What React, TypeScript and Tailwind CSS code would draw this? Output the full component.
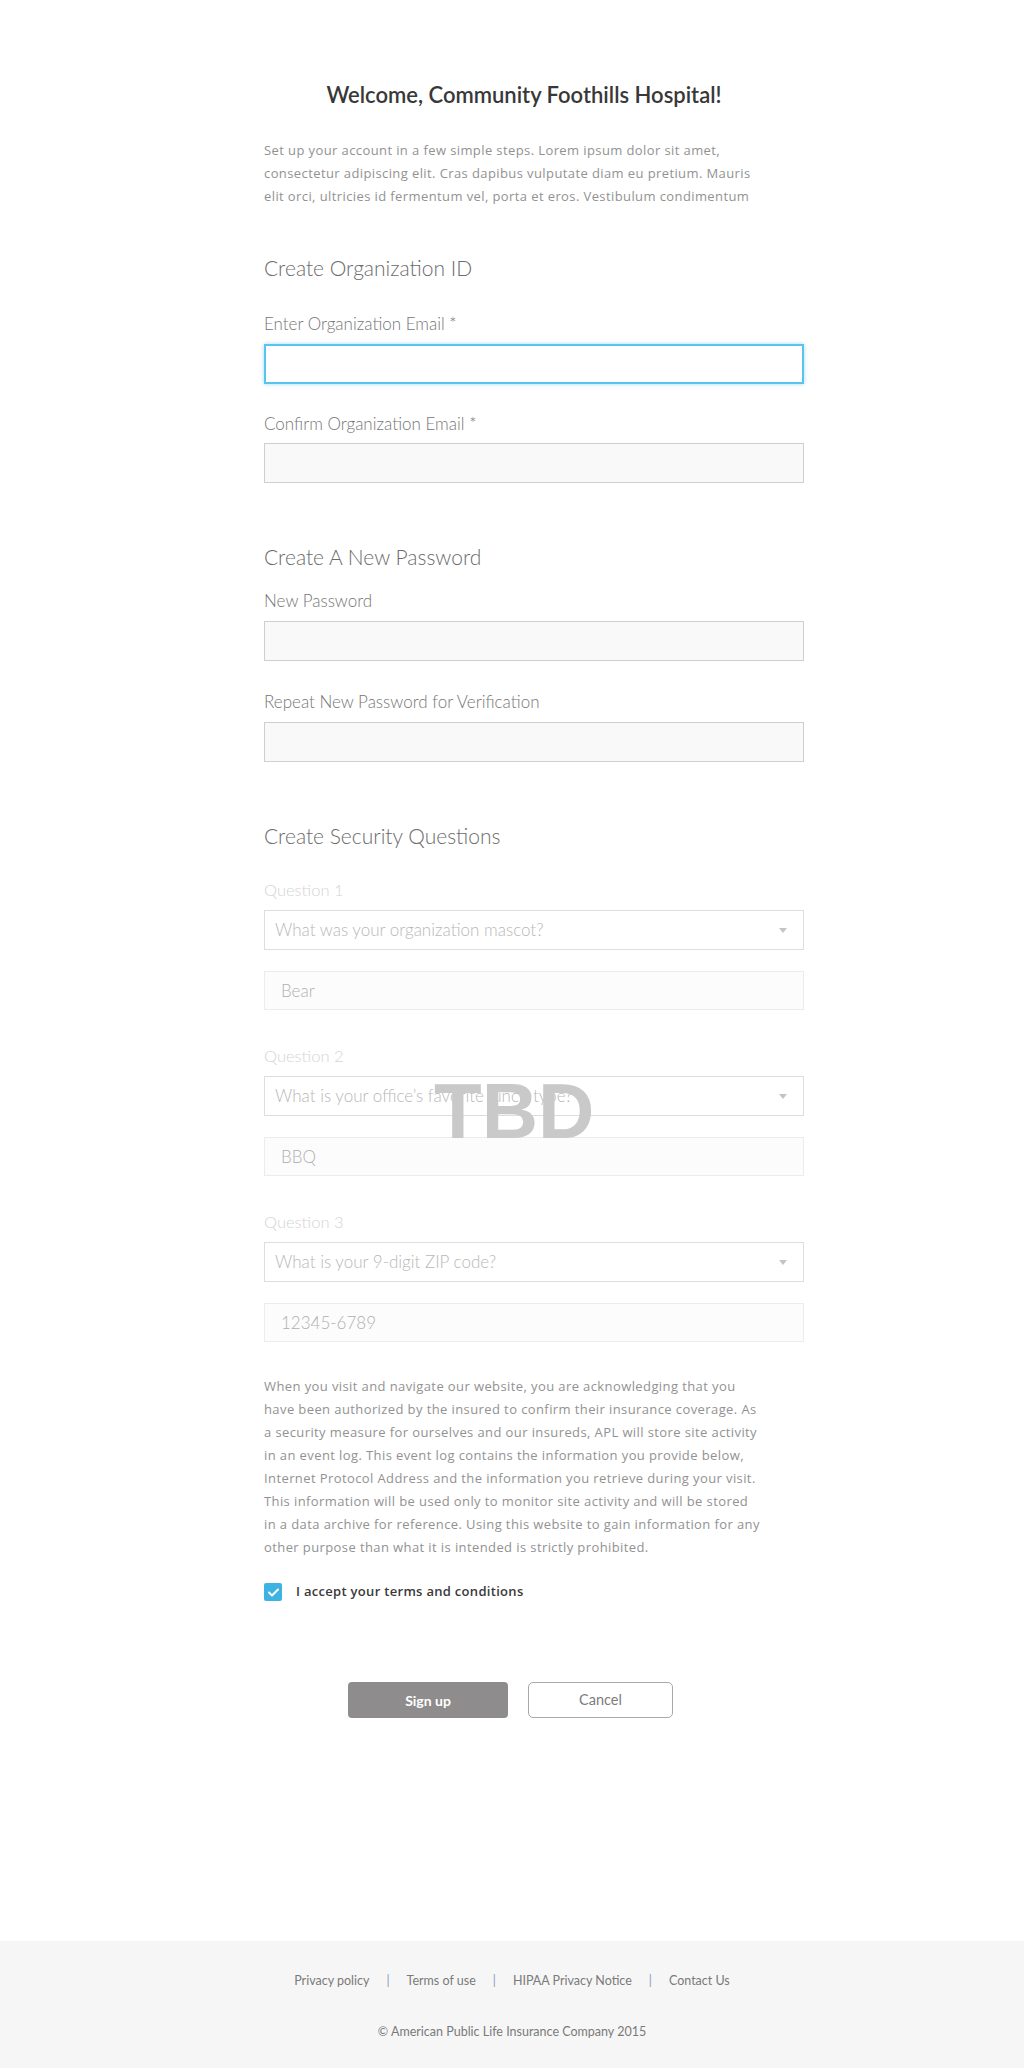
const heading = "font-['Lato',sans-serif] font-light text-[21px] leading-[28px] text-[#6b6b6b]";
const label = "block font-['Lato',sans-serif] font-light text-[17px] leading-[20px] text-[#767676]";
const input = "block w-full h-[40px] bg-[#f9f9f9] border border-[#cfcfcf] outline-none";
const qLabel = "block font-['Lato',sans-serif] font-light text-[16.5px] leading-[20px] text-[#d4d4d4]";
const body = "font-['Open_Sans',sans-serif] text-[13px] leading-[23px] tracking-[0.4px] text-[#929292] whitespace-nowrap";

const intro = [
  "Set up your account in a few simple steps. Lorem ipsum dolor sit amet,",
  "consectetur adipiscing elit. Cras dapibus vulputate diam eu pretium. Mauris",
  "elit orci, ultricies id fermentum vel, porta et eros. Vestibulum condimentum",
];

const terms = [
  "When you visit and navigate our website, you are acknowledging that you",
  "have been authorized by the insured to confirm their insurance coverage. As",
  "a security measure for ourselves and our insureds, APL will store site activity",
  "in an event log. This event log contains the information you provide below,",
  "Internet Protocol Address and the information you retrieve during your visit.",
  "This information will be used only to monitor site activity and will be stored",
  "in a data archive for reference. Using this website to gain information for any",
  "other purpose than what it is intended is strictly prohibited.",
];

const Question = ({
  label: l,
  question,
  answer,
  className,
}: {
  label: string;
  question: string;
  answer: string;
  className: string;
}) => (
  <div className={className}>
    <span className={qLabel}>{l}</span>
    <div className="mt-[10px] h-[40px] flex items-center justify-between px-[10px] bg-white border border-[#dedede] font-['Lato',sans-serif] font-light text-[17px] text-[#b8b8b8]">
      <span>{question}</span>
      <svg width="8" height="5" viewBox="0 0 8 5" className="mr-[6px]">
        <path d="M0 0h8L4 5z" fill="#c4c4c4" />
      </svg>
    </div>
    <div className="mt-[21px] h-[39px] flex items-center px-[16px] bg-[#fcfcfc] border border-[#ececec] font-['Lato',sans-serif] font-light text-[17px] text-[#b0b0b0]">
      {answer}
    </div>
  </div>
);

export default function App() {
  return (
    <div className="min-h-screen bg-white">
      <main className="w-[540px] ml-[264px] pt-[81px]">
        <h1 className="w-[520px] text-center font-['Lato',sans-serif] font-semibold text-[22px] leading-[28px] text-[#383838]">
          Welcome, Community Foothills Hospital!
        </h1>
        <p className={`mt-[30px] ${body}`}>
          {intro.map((line) => (
            <span key={line} className="block">
              {line}
            </span>
          ))}
        </p>

        <h2 className={`mt-[46px] ${heading}`}>Create Organization ID</h2>
        <label className={`mt-[32px] ${label}`}>Enter Organization Email *</label>
        <input className="mt-[10px] block w-full h-[40px] bg-white border-2 border-[#5cc3ec] shadow-[0_0_4px_rgba(92,195,236,0.6)] outline-none" />
        <label className={`mt-[30px] ${label}`}>Confirm Organization Email *</label>
        <input className={`mt-[9px] ${input}`} />

        <h2 className={`mt-[60px] ${heading}`}>Create A New Password</h2>
        <label className={`mt-[20px] ${label}`}>New Password</label>
        <input type="password" className={`mt-[10px] ${input}`} />
        <label className={`mt-[31px] ${label}`}>Repeat New Password for Verification</label>
        <input type="password" className={`mt-[10px] ${input}`} />

        <h2 className={`mt-[60px] ${heading}`}>Create Security Questions</h2>
        <div className="relative">
          <Question
            className="mt-[30px]"
            label="Question 1"
            question="What was your organization mascot?"
            answer="Bear"
          />
          <Question
            className="mt-[36px]"
            label="Question 2"
            question="What is your office’s favorite lunch type?"
            answer="BBQ"
          />
          <Question
            className="mt-[36px]"
            label="Question 3"
            question="What is your 9-digit ZIP code?"
            answer="12345-6789"
          />
          <div className="absolute left-[170px] top-[192px] font-['Liberation_Sans',Arial,sans-serif] font-bold text-[78px] leading-none text-[#c9c9c9]">
            TBD
          </div>
        </div>

        <p className={`mt-[33px] ${body}`}>
          {terms.map((line) => (
            <span key={line} className="block">
              {line}
            </span>
          ))}
        </p>

        <label className="mt-[24px] flex items-center gap-[14px] h-[18px]">
          <span className="w-[18px] h-[18px] rounded-[2px] bg-[#3db3e3] flex items-center justify-center">
            <svg width="11" height="9" viewBox="0 0 11 9">
              <path d="M1 4.5l3 3L10 1.5" stroke="white" strokeWidth="2" fill="none" strokeLinecap="round" strokeLinejoin="round" />
            </svg>
          </span>
          <span className="font-['Open_Sans',sans-serif] font-semibold text-[13px] tracking-[0.3px] text-[#3a3a3a]">
            I accept your terms and conditions
          </span>
        </label>

        <div className="mt-[81px] w-[496px] flex justify-center gap-[20px] pr-[3px]">
          <button className="w-[160px] h-[36px] rounded-[4px] bg-[#8e8c8c] text-white font-['Lato',sans-serif] font-bold text-[14px]">
            Sign up
          </button>
          <button className="w-[145px] h-[36px] rounded-[5px] bg-white border border-[#a9a9a9] text-[#7c7c7c] font-['Lato',sans-serif] text-[14.5px]">
            Cancel
          </button>
        </div>
      </main>

      <footer className="mt-[223px] bg-[#f6f6f6] pt-[30px] pb-[26px] font-['Lato',sans-serif] text-[12.5px] leading-[20px] text-[#7a7a7a]">
        <div className="flex justify-center items-center gap-[17px]">
          <a>Privacy policy</a>
          <span className="text-[#8a9bb8]">|</span>
          <a>Terms of use</a>
          <span className="text-[#8a9bb8]">|</span>
          <a>HIPAA Privacy Notice</a>
          <span className="text-[#8a9bb8]">|</span>
          <a>Contact Us</a>
        </div>
        <p className="mt-[31px] text-center">© American Public Life Insurance Company 2015</p>
      </footer>
    </div>
  );
}
